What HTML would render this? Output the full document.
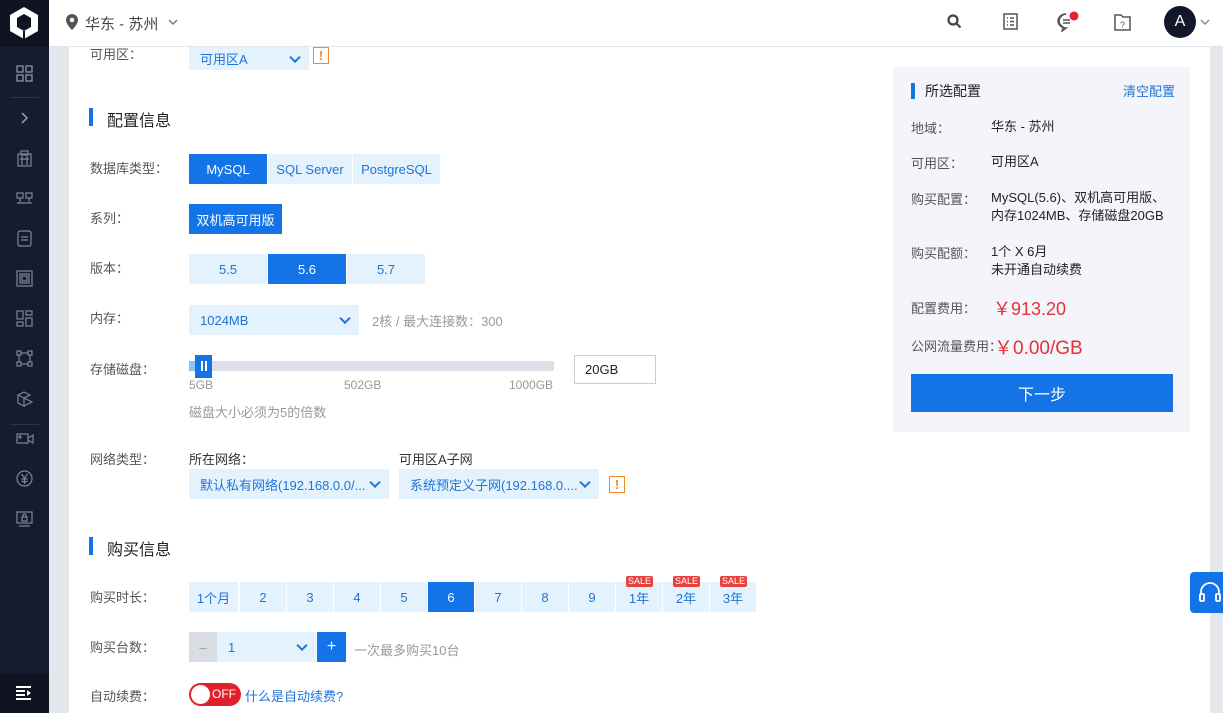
<!DOCTYPE html>
<html><head><meta charset="utf-8"><style>
*{margin:0;padding:0;box-sizing:border-box}
body{width:1223px;height:713px;overflow:hidden;background:#fff;font-family:"Liberation Sans","Noto Sans CJK SC",sans-serif;font-size:13px;color:#333;position:relative}
.a{position:absolute}
.lbl{position:absolute;color:#555;font-size:13px;line-height:16px}
.btn{position:absolute;background:#e4f2fd;color:#1f74d8;font-size:13px;display:flex;align-items:center;justify-content:center}
.on{background:#1473e6;color:#fff}
.sel{position:absolute;background:#e4f2fd;color:#1f74d8;font-size:13px;display:flex;align-items:center;padding-left:11px}
.chev{position:absolute;right:10px;top:50%;width:8px;height:8px;border-right:2px solid #1f74d8;border-bottom:2px solid #1f74d8;transform:translateY(-70%) rotate(45deg)}
.warn{position:absolute;width:16px;height:17px;border:1px solid #f08a24;color:#f08a24;font-size:13px;font-weight:bold;text-align:center;line-height:15px}
.h{position:absolute;font-size:16px;color:#222}
.bar{position:absolute;width:4px;background:#1473e6}
.sale{position:absolute;top:-6px;left:10px;background:#e8423f;color:#fff;font-size:9px;line-height:11px;padding:0 2px;border-radius:2px}
.rl{position:absolute;left:911px;color:#555;font-size:13px}
.rv{position:absolute;left:991px;color:#222;font-size:13px;line-height:18px}
</style></head><body>
<!-- sidebar -->
<div class="a" style="left:0;top:0;width:49px;height:713px;background:#161c30"></div>
<div class="a" style="left:0;top:0;width:49px;height:47px;background:#0f1322"></div>
<svg class="a" style="left:8px;top:6px" width="32" height="34" viewBox="0 0 32 34"><path d="M16 1 L30 9 L30 25 L16 33 L2 25 L2 9Z" fill="#fff"/><path d="M9 12 L16 8 L23 12 L23 21 L16 25 L9 21Z" fill="#0f1322"/><path d="M16 25 L16 33" stroke="#0f1322" stroke-width="2"/></svg>
<div class="a" style="left:0;top:674px;width:49px;height:39px;background:#0f1322"></div>
<div class="a" style="left:10px;top:97px;width:29px;height:1px;background:#2c3449"></div>
<div class="a" style="left:10px;top:424px;width:29px;height:1px;background:#2c3449"></div>
<svg class="a" style="left:16px;top:65px" width="17" height="17" fill="none" stroke="#8a93a8" stroke-width="1.3"><rect x="1" y="1" width="6" height="6"/><rect x="10" y="1" width="6" height="6"/><rect x="1" y="10" width="6" height="6"/><rect x="10" y="10" width="6" height="6"/></svg>
<svg class="a" style="left:20px;top:112px" width="10" height="12" fill="none" stroke="#8a93a8" stroke-width="1.6"><path d="M2 1 L7 6 L2 11"/></svg>
<svg class="a" style="left:16px;top:150px" width="17" height="17" fill="none" stroke="#7c859a" stroke-width="1.2"><rect x="2" y="4" width="13" height="12"/><rect x="5" y="1" width="7" height="4"/><path d="M6 6v9M11 6v9M4 9h9"/></svg>
<svg class="a" style="left:16px;top:191px" width="17" height="17" fill="none" stroke="#7c859a" stroke-width="1.2"><rect x="1" y="2" width="6" height="5"/><rect x="10" y="2" width="6" height="5"/><path d="M4 7v4M13 7v4M1 12h15"/></svg>
<svg class="a" style="left:16px;top:230px" width="17" height="17" fill="none" stroke="#7c859a" stroke-width="1.2"><rect x="2" y="1" width="13" height="15" rx="2"/><path d="M5 7h7M5 10h7"/></svg>
<svg class="a" style="left:16px;top:270px" width="17" height="17" fill="none" stroke="#7c859a" stroke-width="1.2"><rect x="1" y="1" width="15" height="15"/><rect x="4" y="4" width="9" height="9"/><rect x="6" y="6" width="5" height="5"/></svg>
<svg class="a" style="left:16px;top:310px" width="17" height="17" fill="none" stroke="#7c859a" stroke-width="1.2"><rect x="1" y="1" width="6" height="8"/><rect x="10" y="1" width="6" height="4"/><rect x="1" y="12" width="6" height="4"/><rect x="10" y="8" width="6" height="8"/></svg>
<svg class="a" style="left:16px;top:350px" width="17" height="17" fill="none" stroke="#7c859a" stroke-width="1.2"><rect x="1" y="1" width="4" height="4"/><rect x="12" y="1" width="4" height="4"/><rect x="1" y="12" width="4" height="4"/><rect x="12" y="12" width="4" height="4"/><path d="M5 3h7M5 14h7M3 5v7M14 5v7"/></svg>
<svg class="a" style="left:16px;top:390px" width="17" height="17" fill="none" stroke="#7c859a" stroke-width="1.2"><path d="M2 5 L8 2 L14 5 L8 8Z M2 5v8l6 3V8 M8 8l8 4-8 4"/></svg>
<svg class="a" style="left:16px;top:431px" width="18" height="15" fill="none" stroke="#7c859a" stroke-width="1.2"><rect x="1" y="3" width="11" height="9"/><path d="M12 7l5-3v8l-5-3"/><circle cx="4" cy="6" r="1"/></svg>
<svg class="a" style="left:16px;top:470px" width="17" height="17" fill="none" stroke="#7c859a" stroke-width="1.2"><circle cx="8.5" cy="8.5" r="7.5"/><path d="M5.5 4l3 4 3-4M8.5 8v6M5.5 9h6M5.5 11.5h6"/></svg>
<svg class="a" style="left:16px;top:510px" width="17" height="17" fill="none" stroke="#7c859a" stroke-width="1.2"><rect x="1" y="2" width="15" height="11"/><path d="M3 16h11"/><rect x="6" y="7" width="5" height="4"/><path d="M7 7V5.5a1.5 1.5 0 0 1 3 0V7"/></svg>
<svg class="a" style="left:16px;top:686px" width="17" height="14" fill="#fff"><rect x="0" y="0" width="15" height="2"/><rect x="0" y="4" width="9" height="2"/><rect x="0" y="8" width="9" height="2"/><rect x="0" y="12" width="15" height="2"/><path d="M11 4 L15 7 L11 10Z"/></svg>
<!-- grey strips -->
<div class="a" style="left:49px;top:47px;width:20px;height:666px;background:#e4e7ec"></div>
<div class="a" style="left:1210px;top:47px;width:13px;height:666px;background:#e4e7ec"></div>
<!-- header -->
<div class="a" style="left:49px;top:0;width:1174px;height:47px;background:#fff;border-bottom:1px solid #e3e6eb"></div>
<svg class="a" style="left:66px;top:14px" width="12" height="16"><path d="M6 0a6 6 0 0 0-6 6c0 4.5 6 10 6 10s6-5.5 6-10a6 6 0 0 0-6-6z" fill="#555"/><circle cx="6" cy="6" r="2.2" fill="#fff"/></svg>
<div class="a" style="left:85px;top:13px;font-size:15px;color:#444">华东 - 苏州</div>
<svg class="a" style="left:168px;top:19px" width="10" height="7" fill="none" stroke="#777" stroke-width="1.5"><path d="M1 1l4 4 4-4"/></svg>
<svg class="a" style="left:947px;top:14px" width="15" height="15" fill="none" stroke="#444" stroke-width="2.2"><circle cx="6" cy="6" r="4.5"/><path d="M9.5 9.5l4 4"/></svg>
<svg class="a" style="left:1003px;top:13px" width="15" height="17" fill="none" stroke="#555" stroke-width="1.5"><rect x="1" y="1" width="13" height="15"/><path d="M4 5h1M7 5h4M4 8.5h1M7 8.5h4M4 12h1M7 12h4"/></svg>
<svg class="a" style="left:1057px;top:10px" width="24" height="22"><path d="M9 4a8 7 0 1 0 0.1 14 l-4 3 1-4 a8 7 0 0 1 3-13z" fill="none" stroke="#555" stroke-width="1.5"/><path d="M6 10h7M6 13h7" stroke="#555" stroke-width="1.5"/><circle cx="17" cy="6" r="4.5" fill="#e8202a"/></svg>
<svg class="a" style="left:1114px;top:12px" width="17" height="19" fill="none" stroke="#555" stroke-width="1.5"><path d="M1 3h6l2 2h7v13H1z"/><text x="6" y="16" font-size="9" fill="#555" stroke="none" font-family="Liberation Sans">?</text></svg>
<div class="a" style="left:1164px;top:6px;width:32px;height:32px;border-radius:50%;background:#121729;color:#fff;font-size:16px;text-align:center;line-height:32px">A</div>
<svg class="a" style="left:1200px;top:19px" width="10" height="7" fill="none" stroke="#888" stroke-width="1.4"><path d="M1 1l4 4 4-4"/></svg>

<!-- 可用区 -->
<div class="lbl" style="left:90px;top:47px">可用区：</div>
<div class="sel" style="left:189px;top:47px;width:120px;height:23px">可用区A<span class="chev"></span></div>
<div class="warn" style="left:313px;top:47px">!</div>
<div class="bar" style="left:89px;top:108px;height:18px"></div>
<div class="h" style="left:107px;top:107px">配置信息</div>

<div class="lbl" style="left:90px;top:161px">数据库类型：</div>
<div class="btn on" style="left:189px;top:154px;width:78px;height:30px">MySQL</div>
<div class="btn" style="left:268px;top:154px;width:84px;height:30px">SQL Server</div>
<div class="btn" style="left:353px;top:154px;width:87px;height:30px">PostgreSQL</div>

<div class="lbl" style="left:90px;top:211px">系列：</div>
<div class="btn on" style="left:189px;top:204px;width:93px;height:30px">双机高可用版</div>

<div class="lbl" style="left:90px;top:261px">版本：</div>
<div class="btn" style="left:189px;top:254px;width:78px;height:30px">5.5</div>
<div class="btn on" style="left:268px;top:254px;width:78px;height:30px">5.6</div>
<div class="btn" style="left:347px;top:254px;width:78px;height:30px">5.7</div>

<div class="lbl" style="left:90px;top:311px">内存：</div>
<div class="sel" style="left:189px;top:305px;width:170px;height:30px">1024MB<span class="chev"></span></div>
<div class="a" style="left:372px;top:311px;color:#999">2核 / 最大连接数：300</div>

<div class="lbl" style="left:90px;top:362px">存储磁盘：</div>
<div class="a" style="left:189px;top:361px;width:365px;height:10px;background:#dcdfe8"></div>
<div class="a" style="left:189px;top:361px;width:8px;height:10px;background:#8cc4f6"></div>
<div class="a" style="left:195px;top:355px;width:17px;height:23px;background:#1473e6"></div>
<div class="a" style="left:201px;top:361px;width:2px;height:10px;background:#fff"></div>
<div class="a" style="left:205px;top:361px;width:2px;height:10px;background:#fff"></div>
<div class="a" style="left:189px;top:378px;color:#999;font-size:12px">5GB</div>
<div class="a" style="left:344px;top:378px;color:#999;font-size:12px">502GB</div>
<div class="a" style="left:509px;top:378px;color:#999;font-size:12px">1000GB</div>
<div class="a" style="left:574px;top:355px;width:82px;height:29px;border:1px solid #ccc;padding-left:10px;line-height:27px;color:#222">20GB</div>
<div class="a" style="left:189px;top:402px;color:#999">磁盘大小必须为5的倍数</div>

<div class="lbl" style="left:90px;top:452px">网络类型：</div>
<div class="a" style="left:189px;top:449px;color:#333">所在网络：</div>
<div class="sel" style="left:189px;top:469px;width:200px;height:30px">默认私有网络(192.168.0.0/...<span class="chev"></span></div>
<div class="a" style="left:399px;top:449px;color:#333">可用区A子网</div>
<div class="sel" style="left:399px;top:469px;width:200px;height:30px">系统预定义子网(192.168.0....<span class="chev"></span></div>
<div class="warn" style="left:609px;top:476px">!</div>

<div class="bar" style="left:89px;top:537px;height:18px"></div>
<div class="h" style="left:107px;top:536px">购买信息</div>

<div class="lbl" style="left:90px;top:590px">购买时长：</div>
<div class="btn" style="left:189px;top:582px;width:49px;height:30px">1个月</div>
<div class="btn" style="left:240px;top:582px;width:46px;height:30px">2</div>
<div class="btn" style="left:287px;top:582px;width:46px;height:30px">3</div>
<div class="btn" style="left:334px;top:582px;width:46px;height:30px">4</div>
<div class="btn" style="left:381px;top:582px;width:46px;height:30px">5</div>
<div class="btn on" style="left:428px;top:582px;width:46px;height:30px">6</div>
<div class="btn" style="left:475px;top:582px;width:46px;height:30px">7</div>
<div class="btn" style="left:522px;top:582px;width:46px;height:30px">8</div>
<div class="btn" style="left:569px;top:582px;width:46px;height:30px">9</div>
<div class="btn" style="left:616px;top:582px;width:46px;height:30px">1年<span class="sale">SALE</span></div>
<div class="btn" style="left:663px;top:582px;width:46px;height:30px">2年<span class="sale">SALE</span></div>
<div class="btn" style="left:710px;top:582px;width:46px;height:30px">3年<span class="sale">SALE</span></div>

<div class="lbl" style="left:90px;top:640px">购买台数：</div>
<div class="btn" style="left:189px;top:632px;width:28px;height:30px;background:#d9dce3;color:#999">–</div>
<div class="sel" style="left:217px;top:632px;width:99px;height:30px">1<span class="chev"></span></div>
<div class="btn on" style="left:317px;top:632px;width:29px;height:30px;font-size:16px">+</div>
<div class="a" style="left:354px;top:640px;color:#999">一次最多购买10台</div>

<div class="lbl" style="left:90px;top:689px">自动续费：</div>
<div class="a" style="left:189px;top:683px;width:52px;height:23px;border-radius:12px;background:#e0202b"></div>
<div class="a" style="left:191px;top:685px;width:19px;height:19px;border-radius:50%;background:#fff"></div>
<div class="a" style="left:212px;top:687px;color:#fff;font-size:12px">OFF</div>
<div class="a" style="left:245px;top:686px;color:#1f74d8">什么是自动续费?</div>

<!-- right panel -->
<div class="a" style="left:893px;top:67px;width:297px;height:365px;background:#f3f5fa"></div>
<div class="bar" style="left:911px;top:83px;height:16px"></div>
<div class="a" style="left:925px;top:81px;font-size:14px;color:#222">所选配置</div>
<div class="a" style="left:1123px;top:81px;color:#1f74d8">清空配置</div>
<div class="rl" style="top:118px">地域：</div><div class="rv" style="top:118px">华东 - 苏州</div>
<div class="rl" style="top:153px">可用区：</div><div class="rv" style="top:153px">可用区A</div>
<div class="rl" style="top:189px">购买配置：</div><div class="rv" style="top:189px;width:185px">MySQL(5.6)、双机高可用版、内存1024MB、存储磁盘20GB</div>
<div class="rl" style="top:243px">购买配额：</div><div class="rv" style="top:243px">1个 X 6月<br>未开通自动续费</div>
<div class="rl" style="top:298px">配置费用：</div><div class="a" style="left:993px;top:295px;color:#e8303b;font-size:18px">￥913.20</div>
<div class="rl" style="top:336px">公网流量费用：</div><div class="a" style="left:994px;top:333px;color:#e8303b;font-size:19px">￥0.00/GB</div>
<div class="btn on" style="left:911px;top:374px;width:262px;height:38px;font-size:16px">下一步</div>

<div class="a" style="left:1190px;top:572px;width:33px;height:41px;background:#1473e6;border-radius:4px 0 0 4px"></div>
<svg class="a" style="left:1198px;top:582px" width="25" height="22" fill="none" stroke="#fff" stroke-width="1.8"><path d="M3 13V10a9 9 0 0 1 18 0v3"/><rect x="2" y="12" width="4" height="7" rx="1"/><rect x="18" y="12" width="4" height="7" rx="1"/></svg>
</body></html>
